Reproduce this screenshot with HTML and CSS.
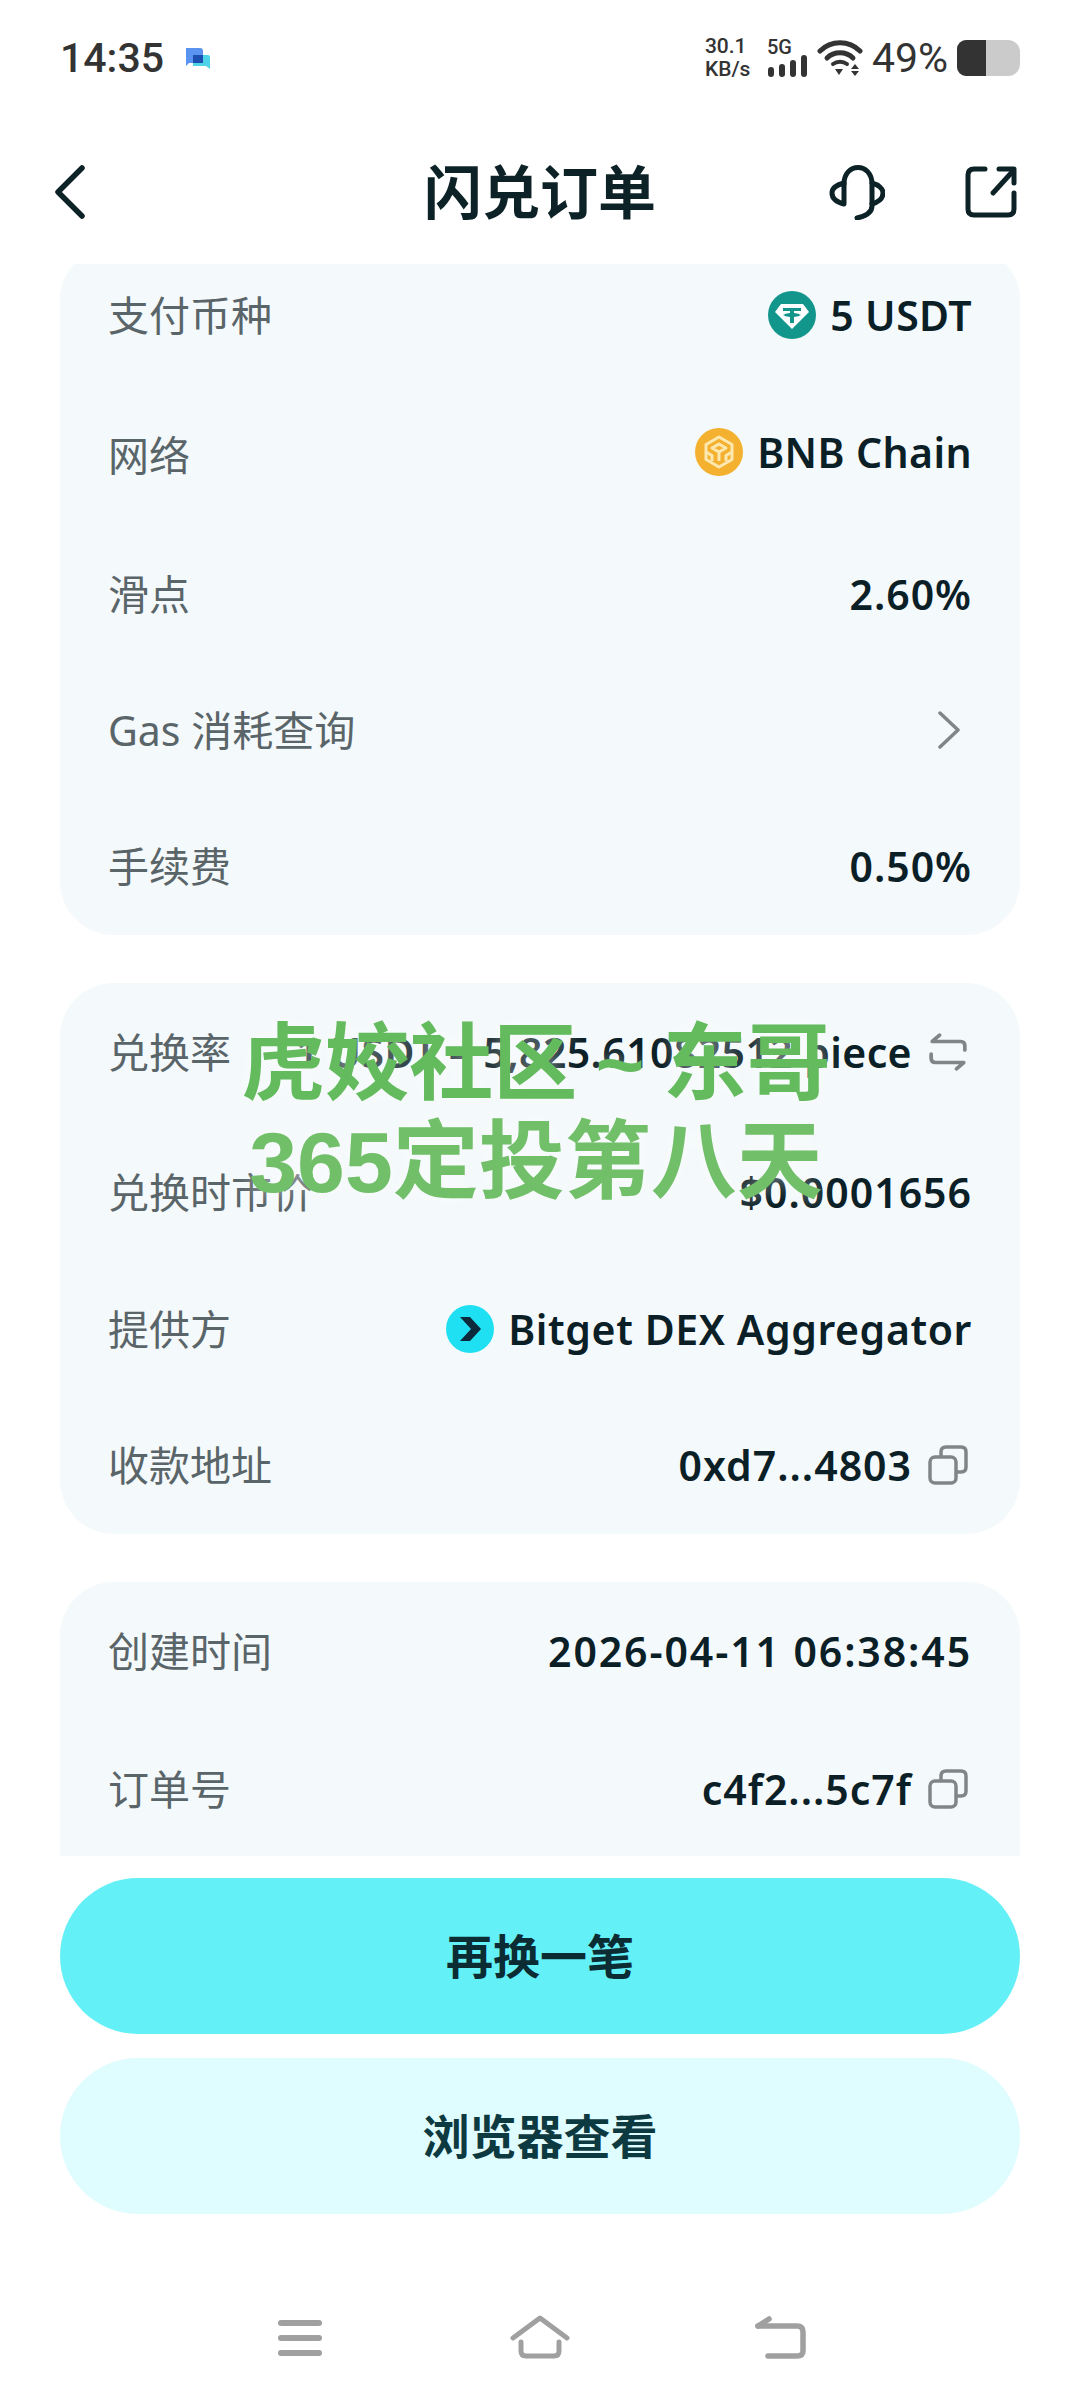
FILE: index.html
```html
<!DOCTYPE html>
<html lang="zh-CN">
<head>
  <meta charset="UTF-8">
  <title>闪兑订单</title>
  <link rel="stylesheet" href="styles.css">
</head>
<body>
  <div class="page">
    <div class="status-bar">
      <div class="status-left">
        <span class="clock">14:35</span>
        <svg class="app-icon" viewBox="0 0 28 24">
          <path d="M3 2 H17 Q20 2 20 5 V17 H6 L3 20 Z" fill="#5b93f0"/>
          <path d="M10 9 H25 Q27 9 27 11 V23 L23 20 H10 Z" fill="#4fd3e8"/>
          <rect x="10" y="9" width="10" height="8" fill="#1c4fb0"/>
        </svg>
      </div>
      <div class="status-right">
        <div class="net-speed"><span>30.1</span><span>KB/s</span></div>
        <div class="signal">
          <span class="signal-label">5G</span>
          <svg class="signal-bars" viewBox="0 0 40 22">
            <rect x="1" y="12" width="6" height="10" rx="3"/>
            <rect x="12" y="9" width="6" height="13" rx="3"/>
            <rect x="23" y="5" width="6" height="17" rx="3"/>
            <rect x="34" y="0" width="6" height="22" rx="3"/>
          </svg>
        </div>
        <svg class="wifi" viewBox="0 0 46 36" fill="none" stroke="#333" stroke-width="5" stroke-linecap="round">
          <path d="M3 11 C14 0 32 0 43 11"/>
          <path d="M10 18 C17 11 29 11 36 18"/>
          <path d="M16 24 C20 21 26 21 30 24" stroke-width="4"/>
          <path d="M18 29 H26 L22 35 Z" fill="#333" stroke="none"/>
          <path d="M38 24 L42 29 H34 Z M34 31 H42 L38 36 Z" fill="#333" stroke="none"/>
        </svg>
        <span class="battery-text">49%</span>
        <div class="battery"><div class="battery-fill"></div></div>
      </div>
    </div>

    <header class="nav-header">
      <svg class="back-icon" viewBox="0 0 32 54" fill="none" stroke="#0d2226" stroke-width="5.5" stroke-linecap="round" stroke-linejoin="round">
        <path d="M28 3 L4 27 L28 51"/>
      </svg>
      <h1 class="title">闪兑订单</h1>
      <div class="header-actions">
        <svg class="headset-icon" viewBox="0 0 56 56" fill="none" stroke="#0d2226" stroke-width="5" stroke-linecap="round" stroke-linejoin="round">
          <path d="M15 20 C15 -2 43 -2 43 20 V42 C43 49 37 52 28 54"/>
          <path d="M15 19 C7 21 3 25 3 29 C3 34 7 38 15 40 Z"/>
          <path d="M43 19 C50 21 54 25 54 29 C54 34 50 38 43 40"/>
        </svg>
        <svg class="share-icon" viewBox="0 0 52 52" fill="none" stroke="#0d2226" stroke-width="5" stroke-linecap="round" stroke-linejoin="round">
          <path d="M20 3 H9 Q3 3 3 9 V43 Q3 49 9 49 H43 Q49 49 49 43 V27"/>
          <path d="M28 27 L48 5"/>
          <path d="M34 3 H49 V17"/>
        </svg>
      </div>
    </header>

    <main class="scroller">
      <section class="card card-first">
        <div class="row">
          <span class="label">支付币种</span>
          <span class="value">
            <svg class="coin" viewBox="0 0 48 48">
              <circle cx="24" cy="24" r="24" fill="#12958a"/>
              <path d="M13 13 H35 L41 21 L24 38 L7 21 Z" fill="#fff"/>
              <path d="M15 17 H33 V20 H26 V22 Q31 22.500 33 24 Q31 25.500 26 26 V32 H22 V26 Q17 25.500 15 24 Q17 22.500 22 22 V20 H15 Z" fill="#12958a"/>
            </svg>
            5 USDT
          </span>
        </div>
        <div class="row row-tall">
          <span class="label">网络</span>
          <span class="value value-up">
            <svg class="coin" viewBox="0 0 48 48">
              <circle cx="24" cy="24" r="24" fill="#f3b12f"/>
              <g fill="none" stroke="#fde8b0" stroke-width="3" stroke-linejoin="round">
                <path d="M24 9 L37 16.500 V31.500 L24 39 L11 31.500 V16.500 Z"/>
                <path d="M17 20 L24 16 L31 20 L24 24 Z"/>
                <path d="M24 24 V33"/>
                <path d="M11 24 L17 27.500 V33 M37 24 L31 27.500 V33"/>
              </g>
            </svg>
            BNB Chain
          </span>
        </div>
        <div class="row">
          <span class="label">滑点</span>
          <span class="value value-num">2.60%</span>
        </div>
        <div class="row row-short">
          <span class="label">Gas 消耗查询</span>
          <svg class="chevron" viewBox="0 0 22 38" fill="none" stroke="#808587" stroke-width="3.500" stroke-linecap="round" stroke-linejoin="round">
            <path d="M2 2 L20 19 L2 36"/>
          </svg>
        </div>
        <div class="row">
          <span class="label">手续费</span>
          <span class="value value-num">0.50%</span>
        </div>
      </section>

      <section class="card">
        <div class="row">
          <span class="label">兑换率</span>
          <span class="value value-action">
            1 USDT = 5,825.61082512 piece
            <svg class="row-icon" viewBox="0 0 38 36" fill="none" stroke="#808587" stroke-width="3.500" stroke-linecap="round" stroke-linejoin="round">
              <path d="M35 16 V12 Q35 8 31 8 H4 L11 2"/>
              <path d="M3 20 V24 Q3 28 7 28 H34 L27 34"/>
            </svg>
          </span>
        </div>
        <div class="row row-tall">
          <span class="label">兑换时市价</span>
          <span class="value value-num">$0.0001656</span>
        </div>
        <div class="row row-short">
          <span class="label">提供方</span>
          <span class="value value-wide">
            <svg class="coin" viewBox="0 0 48 48">
              <circle cx="24" cy="24" r="24" fill="#1fe0f2"/>
              <path d="M14 12 H24 L35 24 L24 36 H14 L25 24 Z" fill="#0c2a3c"/>
            </svg>
            Bitget DEX Aggregator
          </span>
        </div>
        <div class="row">
          <span class="label">收款地址</span>
          <span class="value value-action value-num">
            0xd7...4803
            <svg class="row-icon" viewBox="0 0 40 40" fill="none" stroke="#808587" stroke-width="3.500" stroke-linejoin="round">
              <rect x="2" y="12" width="26" height="26" rx="5"/>
              <path d="M13 12 V7 Q13 2 18 2 H33 Q38 2 38 7 V22 Q38 27 33 27 H28"/>
            </svg>
          </span>
        </div>
      </section>

      <section class="card card-last">
        <div class="row">
          <span class="label">创建时间</span>
          <span class="value value-date">2026-04-11 06:38:45</span>
        </div>
        <div class="row">
          <span class="label">订单号</span>
          <span class="value value-action value-num">
            c4f2...5c7f
            <svg class="row-icon" viewBox="0 0 40 40" fill="none" stroke="#808587" stroke-width="3.500" stroke-linejoin="round">
              <rect x="2" y="12" width="26" height="26" rx="5"/>
              <path d="M13 12 V7 Q13 2 18 2 H33 Q38 2 38 7 V22 Q38 27 33 27 H28"/>
            </svg>
          </span>
        </div>
      </section>
    </main>

    <div class="actions">
      <button class="btn btn-primary">再换一笔</button>
      <button class="btn btn-secondary">浏览器查看</button>
    </div>

    <nav class="system-nav">
      <svg class="sys-icon" viewBox="0 0 60 44" fill="#a0a0a0">
        <rect x="8" y="5" width="44" height="6" rx="3"/>
        <rect x="8" y="20" width="44" height="6" rx="3"/>
        <rect x="8" y="35" width="44" height="6" rx="3"/>
      </svg>
      <svg class="sys-icon" viewBox="0 0 60 44" fill="none" stroke="#a0a0a0" stroke-width="5" stroke-linecap="round" stroke-linejoin="round">
        <path d="M3 23 L30 3 L57 23"/>
        <path d="M11 27 V36 Q11 41 16 41 H44 Q49 41 49 36 V27"/>
      </svg>
      <svg class="sys-icon" viewBox="0 0 60 44" fill="none" stroke="#a0a0a0" stroke-width="5.500" stroke-linecap="round" stroke-linejoin="round">
        <path d="M8 11 H47 Q53 11 53 17 V36 Q53 41 47 41 H18"/>
        <path d="M8 11 L19 4"/>
      </svg>
    </nav>

    <div class="watermark">
      <div class="watermark-line">虎姣社区 ~ 东哥</div>
      <div class="watermark-line watermark-line-alt">365定投第八天</div>
    </div>
  </div>
</body>
</html>
```

FILE: styles.css
```css
* {
  box-sizing: border-box;
}
html, body {
  margin: 0;
  padding: 0;
  background-color: #fff;
}
body {
  font-family: "Noto Sans", "Noto Sans CJK SC", sans-serif;
  color: #0b2026;
}
.page {
  position: relative;
  display: flex;
  flex-direction: column;
  width: 1080px;
  height: 2400px;
  overflow: hidden;
}

/* status bar */
.status-bar {
  display: flex;
  justify-content: space-between;
  align-items: center;
  height: 116px;
  padding: 0 60px;
  color: #333;
}
.status-left,
.status-right {
  display: flex;
  align-items: center;
}
.clock {
  font-family: Roboto, sans-serif;
  font-size: 41px;
  line-height: 40px;
  font-weight: 500;
}
.app-icon {
  width: 28px;
  height: 24px;
  margin-left: 19px;
}
.net-speed {
  display: flex;
  flex-direction: column;
  align-items: flex-start;
  font-family: Roboto, sans-serif;
  font-size: 21px;
  line-height: 23px;
  font-weight: 500;
  width: 62px;
}
.signal {
  display: flex;
  flex-direction: column;
  width: 40px;
}
.signal-label {
  font-family: Roboto, sans-serif;
  font-size: 20px;
  line-height: 16px;
  font-weight: 500;
}
.signal-bars {
  width: 40px;
  height: 22px;
  fill: #333;
}
.wifi {
  width: 46px;
  height: 36px;
  margin-left: 10px;
}
.battery-text {
  font-family: Roboto, sans-serif;
  font-size: 41px;
  line-height: 40px;
  margin-left: 9px;
}
.battery {
  width: 63px;
  height: 36px;
  margin-left: 9px;
  background-color: #cbcbcb;
  border-radius: 9px 12px 12px 9px;
  overflow: hidden;
}
.battery-fill {
  width: 29px;
  height: 100%;
  background-color: #333;
}

/* page header */
.nav-header {
  position: relative;
  display: flex;
  justify-content: space-between;
  align-items: center;
  height: 148px;
  padding: 4px 63px 0 54px;
}
.back-icon {
  width: 32px;
  height: 54px;
}
.title {
  margin: 0;
  font-size: 58px;
  line-height: 80px;
  font-weight: 700;
  color: #0d2226;
  position: absolute;
  left: 0;
  right: 0;
  text-align: center;
}
.header-actions {
  position: relative;
  display: flex;
  align-items: center;
  gap: 80px;
}
.headset-icon {
  width: 56px;
  height: 56px;
}
.share-icon {
  width: 52px;
  height: 52px;
}

/* scrolling content */
.scroller {
  flex: none;
  height: 1592px;
  margin: 0 60px;
  overflow: hidden;
  border-radius: 16px 16px 0 0;
}
.card {
  background-color: #f4f9fb;
  border-radius: 54px;
  padding: 0 48px;
  margin-bottom: 48px;
}
.card-first {
  margin-top: -18px;
}
.card-last {
  border-radius: 54px 54px 0 0;
  margin-bottom: 0;
  padding-bottom: 200px;
}
.row {
  display: flex;
  justify-content: space-between;
  align-items: center;
  height: 138px;
}
.row-tall {
  height: 141px;
}
.row-short {
  height: 134px;
}
.label {
  font-size: 41px;
  line-height: 56px;
  color: #5a6569;
}
.value {
  display: flex;
  align-items: center;
  gap: 14px;
  font-size: 41px;
  line-height: 56px;
  font-weight: 580;
  letter-spacing: 0.4px;
  white-space: nowrap;
}
.value-action {
  gap: 16px;
}
.value-num {
  letter-spacing: 1px;
}
.value-wide {
  letter-spacing: 0.6px;
}
.value-date {
  letter-spacing: 1.9px;
}
.value-up {
  margin-top: -6px;
}
.coin {
  width: 48px;
  height: 48px;
}
.row-icon {
  width: 40px;
  height: 40px;
  margin-right: 4px;
}
.chevron {
  width: 22px;
  height: 38px;
  margin-right: 12px;
}

/* bottom buttons */
.actions {
  display: flex;
  flex-direction: column;
  gap: 24px;
  padding: 22px 60px 0;
}
.btn {
  height: 156px;
  padding: 0 0 6px;
  border: none;
  border-radius: 78px;
  font-family: "Noto Sans CJK SC", sans-serif;
  font-size: 47px;
  font-weight: 700;
}
.btn-primary {
  background-color: #64f0f7;
  color: #0b2c33;
}
.btn-secondary {
  background-color: #dffcff;
  color: #0c3a40;
}

/* system navigation */
.system-nav {
  display: grid;
  grid-template-columns: repeat(3, 240px);
  justify-content: center;
  justify-items: center;
  padding-top: 101px;
}
.sys-icon {
  height: 44px;
  width: 60px;
}

/* overlay caption */
.watermark {
  position: absolute;
  top: 1015px;
  left: 0;
  right: 8px;
  text-align: center;
  font-family: "Liberation Sans", "Noto Sans CJK SC", sans-serif;
  font-size: 84px;
  line-height: 98px;
  font-weight: 700;
  word-spacing: -5px;
  color: #63bb5d;
  text-shadow: 0 0 18px rgba(255, 255, 255, 0.55);
}
.watermark-line-alt {
  font-size: 86px;
  color: #71bf69;
}
```
